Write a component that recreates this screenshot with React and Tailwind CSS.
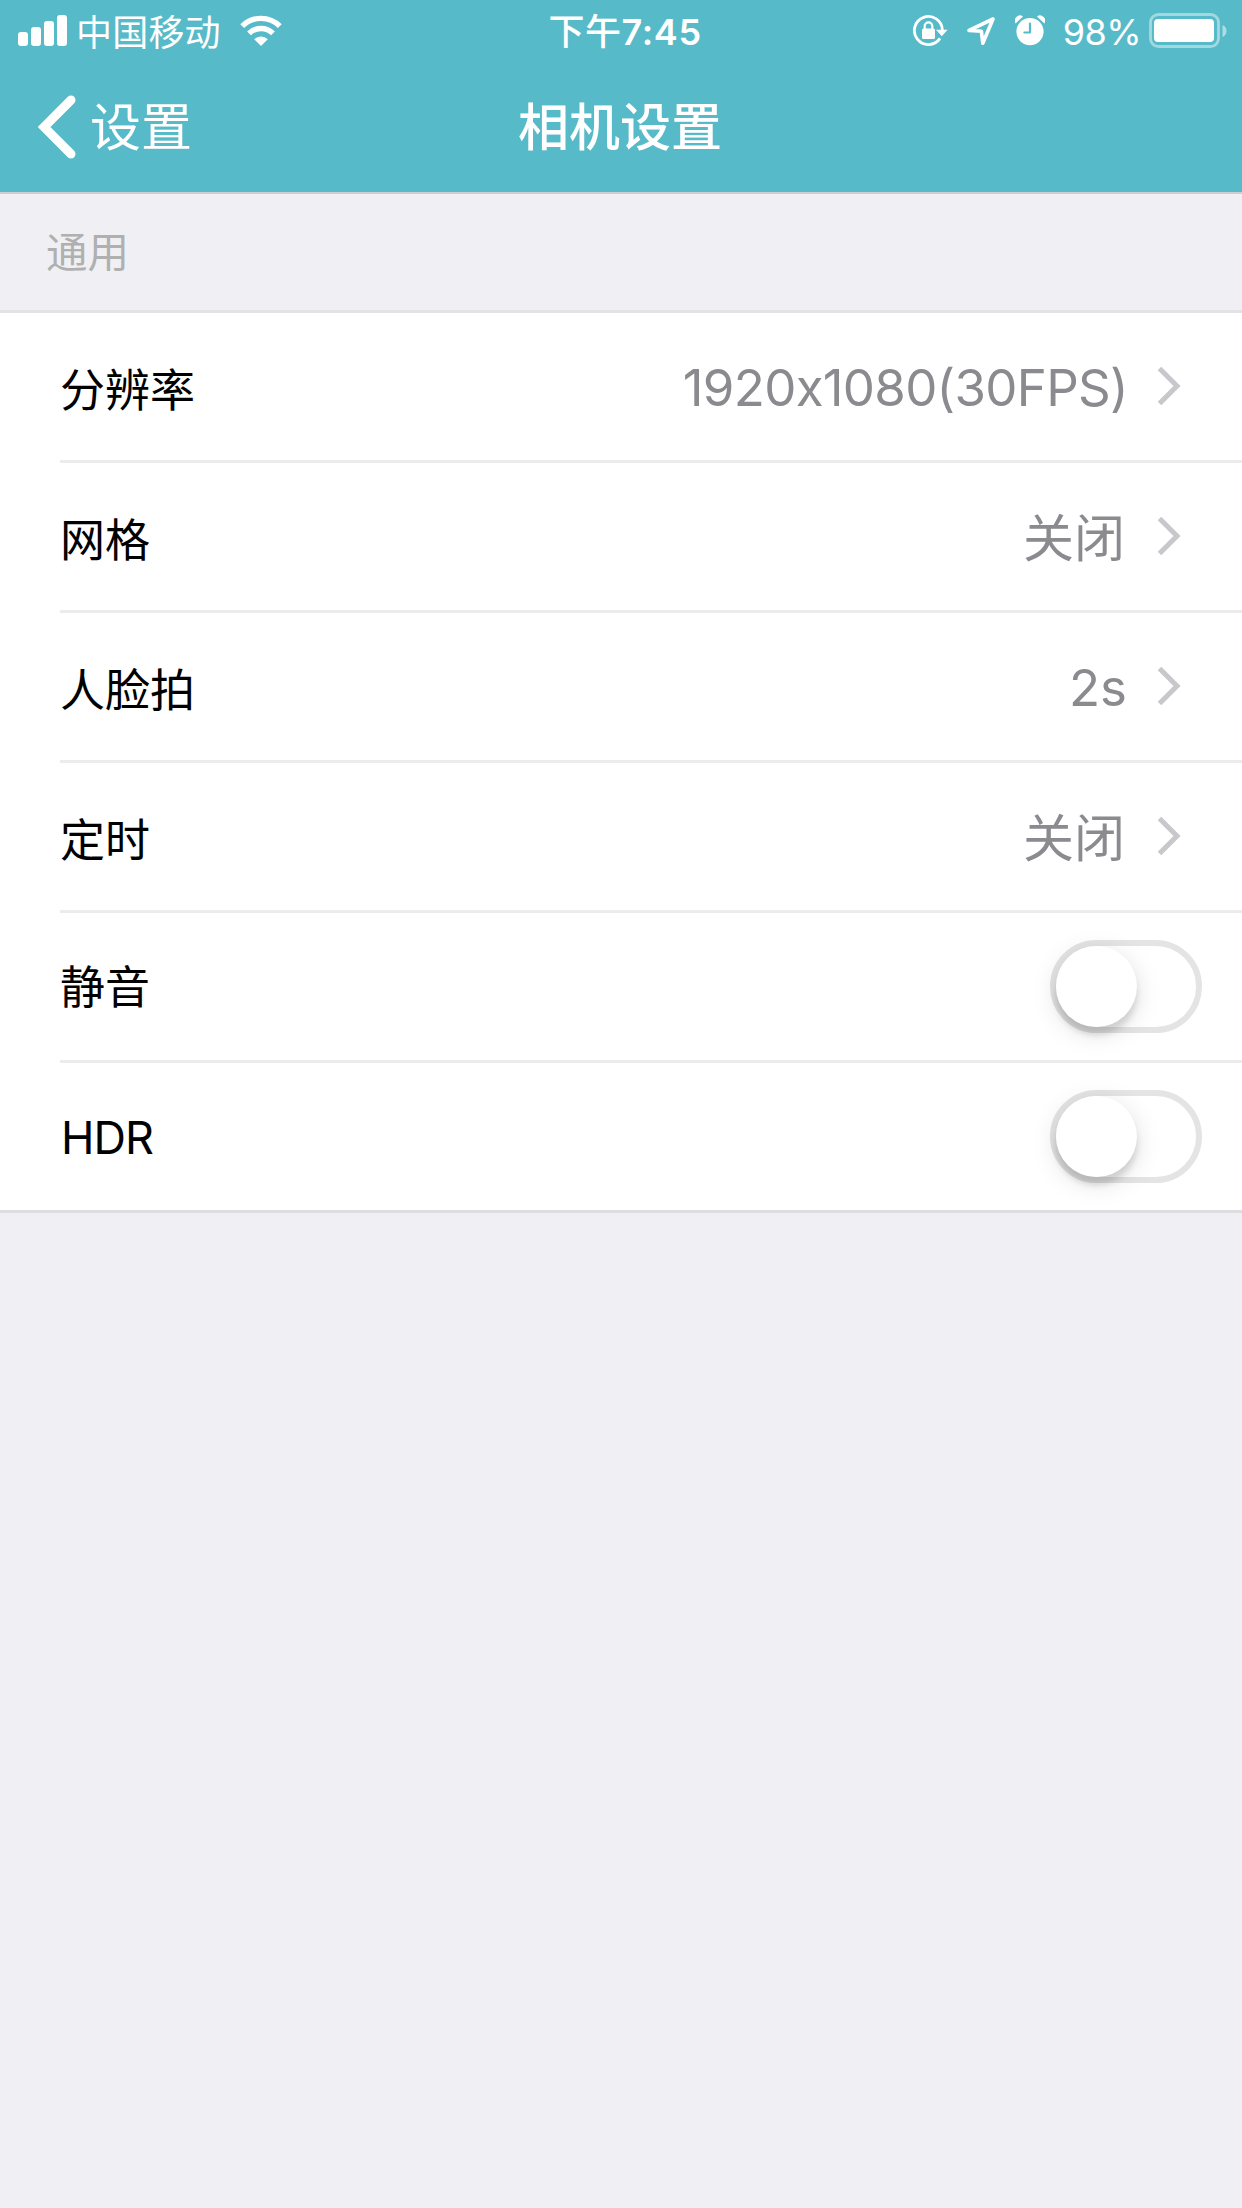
import { useState } from "react";

const SignalIcon = () => (
    <svg className="w-[49px] h-[31px]" viewBox="0 0 49 31" fill="white">
        <rect x="0" y="17" width="10" height="14" rx="3" />
        <rect x="13" y="12" width="10" height="19" rx="3" />
        <rect x="26" y="6" width="10" height="25" rx="3" />
        <rect x="39" y="0" width="10" height="31" rx="3" />
    </svg>
);

const WifiIcon = () => (
    <svg className="w-[42px] h-[31px]" viewBox="0 0 42 31" fill="none" stroke="white" strokeWidth="5.4">
        <path d="M2.2 11.2a26.6 26.6 0 0 1 37.6 0" />
        <path d="M9 18.4a17 17 0 0 1 24 0" />
        <path d="M21 31l-6.8-6.8a9.6 9.6 0 0 1 13.6 0z" fill="white" stroke="none" />
    </svg>
);

const RotationLockIcon = () => (
    <svg className="w-[36px] h-[31px]" viewBox="0 0 36 31" fill="none" stroke="white" strokeWidth="2.8">
        <path d="M27 23.4A14 14 0 1 1 29.4 15" />
        <path d="M23 14.8h11.6l-5.8 6.4z" fill="white" stroke="none" />
        <rect x="9" y="13.6" width="13" height="10.4" rx="1.6" fill="white" stroke="none" />
        <path d="M11.7 14.5v-3.4a3.8 3.8 0 0 1 7.6 0v3.4" strokeWidth="2.2" />
    </svg>
);

const LocationIcon = () => (
    <svg className="w-[30px] h-[30px]" viewBox="0 0 30 30" fill="none" stroke="white" strokeWidth="3.6" strokeLinejoin="round">
        <path d="M27 3L3 14.4l12.4.8 1.4 12z" />
    </svg>
);

const AlarmIcon = () => (
    <svg className="w-[30px] h-[31px]" viewBox="0 0 30 31" fill="white">
        <circle cx="15" cy="16.6" r="13.6" />
        <path d="M.6 8.4A5.2 5.2 0 0 1 8 1.4z" />
        <path d="M29.4 8.4A5.2 5.2 0 0 0 22 1.4z" />
        <path d="M15 8.5v9H9.4" fill="none" stroke="#57bac8" strokeWidth="2.2" strokeLinecap="round" strokeLinejoin="round" />
    </svg>
);

const BatteryIcon = () => (
    <svg className="w-[78px] h-[36px]" viewBox="0 0 78 36" fill="white">
        <rect x="1.5" y="1.5" width="68" height="32" rx="8" fill="none" stroke="white" strokeOpacity=".45" strokeWidth="2.8" />
        <rect x="5" y="6" width="60" height="23" rx="4" />
        <path d="M73.5 12a6.5 6.5 0 0 1 0 12z" fillOpacity=".5" />
    </svg>
);

const StatusBar = () => (
    <div className="flex h-[60px] text-[36px] leading-[60px]">
        <div className="flex flex-1 pl-[18px]">
            <div className="pt-[15px]"><SignalIcon /></div>
            <span className="ml-[9px] mt-[3px] tracking-[0.2px]">中国移动</span>
            <div className="ml-[19px] pt-[15px]"><WifiIcon /></div>
        </div>
        <span className="mt-[2px] pl-[5px] font-medium tracking-[0.6px]">下午<b className="font-semibold">7:45</b></span>
        <div className="flex flex-1 justify-end pr-[15px]">
            <div className="pt-[15px]"><RotationLockIcon /></div>
            <div className="ml-[17px] pt-[16px]"><LocationIcon /></div>
            <div className="ml-[19px] pt-[15px]"><AlarmIcon /></div>
            <span className="ml-[18px] mt-[2px] tracking-[-0.6px]">98%</span>
            <div className="ml-[8px] pt-[13px]"><BatteryIcon /></div>
        </div>
    </div>
);

const NavBar = () => (
    <div className="grid grid-cols-3 h-[132px] pt-[28px] text-[51px] leading-[80px]">
        <button className="flex pl-[38px]">
            <svg className="mt-[6px] w-[39px] h-[66px]" viewBox="0 0 39 66" fill="none" stroke="white" strokeWidth="9" strokeLinecap="round">
                <path d="M33 6L6 33l27 27" strokeLinejoin="miter" />
            </svg>
            <span className="ml-[13px]">设置</span>
        </button>
        <h1 className="pr-[2px] text-center font-medium">相机设置</h1>
    </div>
);

const Chevron = () => (
    <svg className="ml-[29px] mb-px w-[24px] h-[40px]" viewBox="0 0 24 40" fill="none" stroke="#c7c7cc" strokeWidth="5">
        <path d="M2.5 2.5L20 20 2.5 37.5" />
    </svg>
);

const Toggle = ({ on, onChange }) => (
    <button
        role="switch"
        aria-checked={on}
        onClick={() => onChange(!on)}
        className={`flex w-[152px] h-[93px] rounded-full border-[6px] ${on ? "justify-end border-[#57bac8] bg-[#57bac8]" : "border-[#e4e4e4] bg-white"}`}
    >
        <span className="w-[81px] h-[81px] rounded-full bg-white shadow-[0_8px_6px_rgba(0,0,0,0.12),0_6px_26px_rgba(0,0,0,0.13)]"></span>
    </button>
);

const items = [
    { label: "分辨率", value: "1920x1080(30FPS)", valueClass: "pt-[2px] tracking-[-0.7px]" },
    { label: "网格", value: "关闭", valueClass: "pt-[4px] pr-[3px]" },
    { label: "人脸拍", value: "2s", valueClass: "pt-[2px] pr-px" },
    { label: "定时", value: "关闭", valueClass: "pt-[4px] pr-[3px]" },
    { label: "静音", key: "mute" },
    { label: "HDR", key: "hdr" },
];

const Row = ({ item, last, on, onChange }) => (
    <div className={last ? "h-[150px] border-b-[3px] border-[#dedee0]" : "h-[150px] pl-[60px]"}>
        <div className={`flex h-full items-center justify-between ${last ? "pl-[61px]" : "border-b-[3px] border-[#ececec]"}`}>
            <span className={`text-[45px] leading-[60px] text-black ${item.key ? "pt-[3px]" : "pt-[9px]"} ${last ? "tracking-[-1px]" : ""}`}>
                {item.label}
            </span>
            {item.key ? (
                <div className="pr-[40px]">
                    <Toggle on={on} onChange={onChange} />
                </div>
            ) : (
                <div className="flex items-center pr-[61px]">
                    <span className={`text-[51px] leading-[60px] text-[#8a8a8f] ${item.valueClass}`}>{item.value}</span>
                    <Chevron />
                </div>
            )}
        </div>
    </div>
);

export default function App() {
    const [switches, setSwitches] = useState({ mute: false, hdr: false });

    return (
        <div className="min-h-screen w-full bg-[#efeff4] font-['Inter','Noto_Sans_CJK_SC',sans-serif] [font-feature-settings:'calt'_0]">
            <header className="bg-[#57bac8] text-white">
                <StatusBar />
                <NavBar />
            </header>
            <h2 className="h-[121px] border-t-2 border-b-[3px] border-t-[#cfcdd2] border-b-[#e3e2e7] pl-[46px] pt-[29px] text-[41.5px] leading-[60px] text-[#b0b0b0]">
                通用
            </h2>
            <main className="bg-white">
                {items.map((item, i) => (
                    <Row
                        key={item.label}
                        item={item}
                        last={i === items.length - 1}
                        on={switches[item.key]}
                        onChange={(v) => setSwitches({ ...switches, [item.key]: v })}
                    />
                ))}
            </main>
        </div>
    );
}
